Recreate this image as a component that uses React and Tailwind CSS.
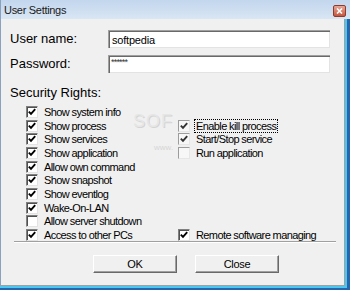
import React from 'react';

const rows = [
  { left: { label: 'Show system info', checked: true } },
  { left: { label: 'Show process', checked: true }, right: { label: 'Enable kill process', checked: true, focus: true, dim: true } },
  { left: { label: 'Show services', checked: true }, right: { label: 'Start/Stop service', checked: true, dim: true } },
  { left: { label: 'Show application', checked: true }, right: { label: 'Run application', checked: false, dim: true } },
  { left: { label: 'Allow own command', checked: true } },
  { left: { label: 'Show snapshot', checked: true } },
  { left: { label: 'Show eventlog', checked: true } },
  { left: { label: 'Wake-On-LAN', checked: true } },
  { left: { label: 'Allow server shutdown', checked: false } },
  { left: { label: 'Access to other PCs', checked: true }, right: { label: 'Remote software managing', checked: true } },
];

function Check({ item }) {
  if (!item) return <div />;
  return (
    <div className="flex items-center h-[13.7px]">
      <div
        className={`w-[12px] h-[12px] flex items-center justify-center border-t border-l border-b border-r ${
          item.dim
            ? 'bg-[#f7f7f7] border-t-[#9c9c9c] border-l-[#9c9c9c] border-r-[#e6e6e6] border-b-[#e6e6e6]'
            : 'bg-white border-t-[#808080] border-l-[#808080] border-r-[#e3e3e3] border-b-[#e3e3e3] shadow-[inset_1px_1px_0_#505050]'
        }`}
      >
        {item.checked && (
          <svg width="8" height="8" viewBox="0 0 8 8">
            <path d="M0.8 3.6 L3 5.8 L7.2 1.2" fill="none" stroke={item.dim ? '#333' : '#000'} strokeWidth="1.9" />
          </svg>
        )}
      </div>
      <span
        className={`ml-[5px] text-[11px] leading-[12px] tracking-[-0.6px] text-black px-[1px] ${
          item.focus ? 'outline-1 outline-dotted outline-black' : ''
        }`}
      >
        {item.label}
      </span>
    </div>
  );
}

export default function App() {
  return (
    <div className="w-[350px] h-[290px] flex flex-col overflow-hidden" style={{ fontFamily: '"Liberation Sans", Arial, sans-serif' }}>
      {/* Title bar */}
      <div className="h-[19px] flex items-center pl-[3px] bg-gradient-to-b from-[#c2d6ed] to-[#d9e6f4] border-l border-[#8aa2bf]">
        <span className="text-[11px] tracking-[-0.3px] text-[#1a1a1a] pt-[2px]">User Settings</span>
        <div className="ml-auto mr-[4px] mt-[2px] w-[13px] h-[12px] rounded-[2px] border border-[#8e3b2c] bg-gradient-to-b from-[#e7a796] to-[#c4553f] flex items-center justify-center">
          <svg width="7" height="6" viewBox="0 0 7 6">
            <path d="M1 0.5 L6 5.5 M6 0.5 L1 5.5" stroke="#fff" strokeWidth="1.6" />
          </svg>
        </div>
      </div>

      {/* Body */}
      <div className="h-[271px] bg-[#2566ad]">
        <div className="w-[347px] h-[269px] border-r-[2px] border-b-[2px] border-[#4cc8f0]">
          <div className="relative w-[345px] h-[267px] bg-[#f0f0f0] border-l border-l-[#8aa2bf] border-r border-r-[#a0a0a0] border-b border-b-[#a0a0a0] flex flex-col">
            {/* watermark, only the part that shows between the columns */}
            <div className="absolute left-[132px] top-[92px] whitespace-nowrap text-[18px] leading-[20px] tracking-[1px] text-[#e6e6e6] [text-shadow:1px_1px_0_#d4d4d4]">SOF</div>
            <div className="absolute left-[153px] top-[124px] whitespace-nowrap text-[8px] leading-[9px] text-[#d6d6d6]">www.</div>

            <div className="relative flex items-center h-[18px] mt-[11px] pl-[9px]">
              <span className="w-[98px] text-[13px] text-black">User name:</span>
              <div className="w-[222px] h-[18px] bg-white border-t border-l border-[#a0a0a0] border-r-white border-b-white shadow-[inset_1px_1px_0_#696969,inset_-1px_-1px_0_#e3e3e3] pl-[3px] flex items-center">
                <span className="text-[11px] tracking-[-0.2px] text-black leading-[12px]">softpedia</span>
              </div>
            </div>

            <div className="relative flex items-center h-[18px] mt-[7px] pl-[9px]">
              <span className="w-[98px] text-[13px] text-black">Password:</span>
              <div className="w-[222px] h-[18px] bg-white border-t border-l border-[#a0a0a0] border-r-white border-b-white shadow-[inset_1px_1px_0_#696969,inset_-1px_-1px_0_#e3e3e3] pl-[2px] flex items-start pt-[1px]">
                <span className="text-[9px] tracking-[-0.8px] text-[#333] leading-[10px]">******</span>
              </div>
            </div>

            <div className="relative mt-[12px] pl-[9px] h-[16px] text-[13px] leading-[16px] text-black">Security Rights:</div>

            <div className="relative mt-[4px] pl-[25px] grid grid-cols-[152px_1fr]">
              {rows.map((r, i) => (
                <React.Fragment key={i}>
                  <Check item={r.left} />
                  <Check item={r.right} />
                </React.Fragment>
              ))}
            </div>

            <div className="relative -mt-[1px] ml-[13px] w-[322px] h-[2px] border-t border-[#a0a0a0] border-b border-b-white" />

            <div className="relative flex mt-[12px] ml-[92px] gap-[18px]">
              {['OK', 'Close'].map((b) => (
                <div
                  key={b}
                  className="w-[84px] h-[18px] bg-[#f0f0f0] border border-t-white border-l-white border-r-[#696969] border-b-[#696969] shadow-[inset_-1px_-1px_0_#a0a0a0] flex items-center justify-center text-[11px] tracking-[-0.3px] text-black"
                >
                  {b}
                </div>
              ))}
            </div>
          </div>
        </div>
      </div>
    </div>
  );
}
